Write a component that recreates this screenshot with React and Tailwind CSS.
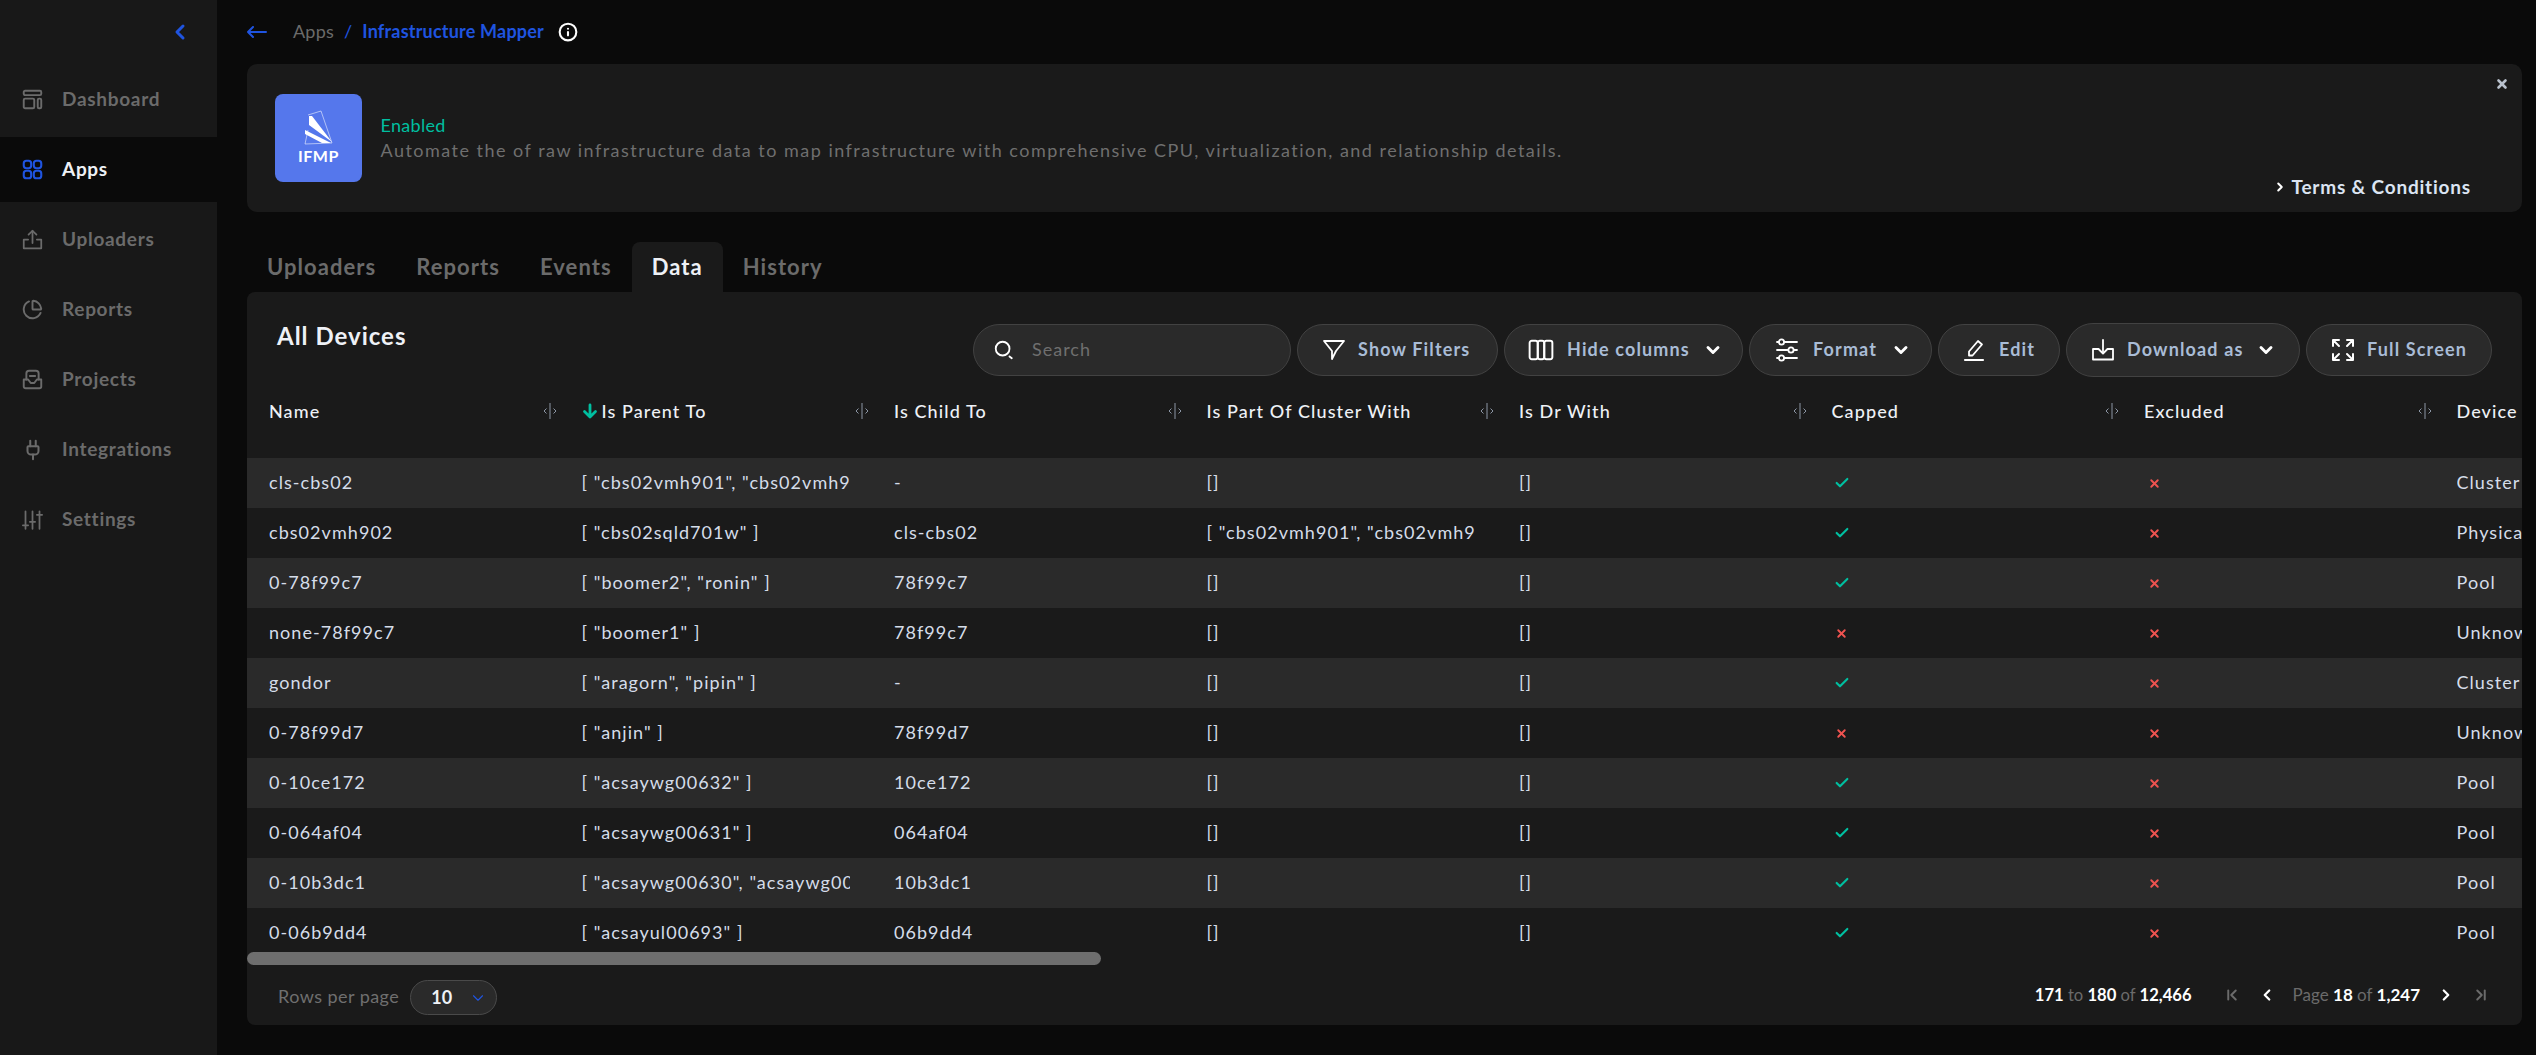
import {
  ChevronDown,
  ChevronFirst,
  ChevronLast,
  ChevronLeft,
  ChevronRight,
  ChartPie,
  Check,
  Info,
  Plug,
  X,
} from "lucide-react";

const FONT = "font-['Lato','Open_Sans',sans-serif]";

function Svg({ className, children, width = 2 }) {
  return (
    <svg viewBox="0 0 24 24" fill="none" stroke="currentColor" strokeWidth={width} strokeLinecap="round" strokeLinejoin="round" className={className}>
      {children}
    </svg>
  );
}

const DashIcon = () => (
  <Svg className="w-[21px] h-[21px]" width={2.2}>
    <rect x="2" y="2" width="20" height="5" rx="1.5" />
    <rect x="2" y="11" width="12" height="11" rx="1.5" />
    <rect x="18" y="11" width="4" height="11" rx="1.5" />
  </Svg>
);
const AppsIcon = () => (
  <Svg className="w-[21px] h-[21px]" width={2.4}>
    <rect x="2" y="2" width="8.5" height="8.5" rx="3" />
    <rect x="13.5" y="2" width="8.5" height="8.5" rx="3" />
    <rect x="2" y="13.5" width="8.5" height="8.5" rx="3" />
    <rect x="13.5" y="13.5" width="8.5" height="8.5" rx="3" />
  </Svg>
);
const UploadIcon = () => (
  <Svg className="w-[21px] h-[21px]" width={2}>
    <path d="M7 12H2v10h20V12h-5" />
    <path d="M12 16V2" />
    <path d="M7.5 6.5 12 2l4.5 4.5" />
  </Svg>
);
const InboxIcon = () => (
  <Svg className="w-[21px] h-[21px]" width={2.2}>
    <path d="M5 12V5a3 3 0 0 1 3-3h8a3 3 0 0 1 3 3v7" />
    <path d="M9 8h6" />
    <path d="M2 12h5l3 4h4l3-4h5v8a2 2 0 0 1-2 2H4a2 2 0 0 1-2-2z" />
  </Svg>
);
const SlidersIcon = () => (
  <Svg className="w-[21px] h-[24px]" width={2}>
    <path d="M4 2v20M12 2v20M20 2v20" />
    <path d="M1 18h6M9 14h6M17 6h6" />
  </Svg>
);

const SearchIcon = () => (
  <Svg className="w-[22px] h-[22px] text-white" width={2}>
    <circle cx="10.5" cy="10.5" r="7.5" />
    <path d="m18 19 2.5 2" />
  </Svg>
);
const FunnelIcon = () => (
  <Svg className="w-[24px] h-[24px] text-white" width={1.8}>
    <path d="M2 3h20l-8 10-4 8v-8z" />
  </Svg>
);
const ColumnsIcon = () => (
  <Svg className="w-[26px] h-[26px] text-white" width={1.8}>
    <rect x="1.5" y="3.5" width="7.5" height="17" rx="2" />
    <rect x="9" y="3.5" width="6" height="17" rx="2" />
    <rect x="15" y="3.5" width="7.5" height="17" rx="2" />
  </Svg>
);
const FormatIcon = () => (
  <Svg className="w-[24px] h-[24px] text-white" width={1.8}>
    <path d="M9.5 4H22M2 12h11M19 12h3M9.5 20H22" />
    <path d="M2 4h1.5M2 20h1.5" />
    <circle cx="6.5" cy="4" r="2.6" />
    <circle cx="16" cy="12" r="2.6" />
    <circle cx="6.5" cy="20" r="2.6" />
  </Svg>
);
const PenIcon = () => (
  <Svg className="w-[24px] h-[24px] text-white" width={1.8}>
    <path d="M3 22h18" strokeWidth="2.2" />
    <path d="M7 17.5v-4L16 3l4 3.5-9.5 11z" />
  </Svg>
);
const DownloadIcon = () => (
  <Svg className="w-[24px] h-[24px] text-white" width={1.8}>
    <path d="M7.5 11H2v10.5h20V11h-5.5" />
    <path d="M12 2v13" />
    <path d="m8 11.5 4 4 4-4" />
  </Svg>
);
const ExpandIcon = () => (
  <Svg className="w-[24px] h-[24px] text-white" width={2}>
    <path d="M2 8V2h6M2 2l6 6" />
    <path d="M22 8V2h-6M22 2l-6 6" />
    <path d="M2 16v6h6M2 22l6-6" />
    <path d="M22 16v6h-6M22 22l-6-6" />
  </Svg>
);
const ResizeIcon = () => (
  <svg viewBox="0 0 16 20" className="w-[16px] h-[20px] text-[#8c96a5]" fill="none" stroke="currentColor" strokeWidth="1">
    <path d="M8 2v16" />
    <path d="M4.5 7.5 2 10l2.5 2.5M11.5 7.5 14 10l-2.5 2.5" />
  </svg>
);

const NAV = [
  { label: "Dashboard", icon: <DashIcon /> },
  { label: "Apps", icon: <AppsIcon />, active: true },
  { label: "Uploaders", icon: <UploadIcon /> },
  { label: "Reports", icon: <ChartPie className="w-[21px] h-[21px]" strokeWidth={2.2} /> },
  { label: "Projects", icon: <InboxIcon /> },
  { label: "Integrations", icon: <Plug className="w-[22px] h-[22px]" strokeWidth={2.2} /> },
  { label: "Settings", icon: <SlidersIcon /> },
];

const COLS = ["Name", "Is Parent To", "Is Child To", "Is Part Of Cluster With", "Is Dr With", "Capped", "Excluded", "Device"];

const ROWS = [
  ["cls-cbs02", '[ "cbs02vmh901", "cbs02vmh902" ]', "-", "[]", "[]", true, false, "Cluster"],
  ["cbs02vmh902", '[ "cbs02sqld701w" ]', "cls-cbs02", '[ "cbs02vmh901", "cbs02vmh903" ]', "[]", true, false, "Physical"],
  ["0-78f99c7", '[ "boomer2", "ronin" ]', "78f99c7", "[]", "[]", true, false, "Pool"],
  ["none-78f99c7", '[ "boomer1" ]', "78f99c7", "[]", "[]", false, false, "Unknown"],
  ["gondor", '[ "aragorn", "pipin" ]', "-", "[]", "[]", true, false, "Cluster"],
  ["0-78f99d7", '[ "anjin" ]', "78f99d7", "[]", "[]", false, false, "Unknown"],
  ["0-10ce172", '[ "acsaywg00632" ]', "10ce172", "[]", "[]", true, false, "Pool"],
  ["0-064af04", '[ "acsaywg00631" ]', "064af04", "[]", "[]", true, false, "Pool"],
  ["0-10b3dc1", '[ "acsaywg00630", "acsaywg00629" ]', "10b3dc1", "[]", "[]", true, false, "Pool"],
  ["0-06b9dd4", '[ "acsayul00693" ]', "06b9dd4", "[]", "[]", true, false, "Pool"],
];

function Pill({ icon, label, chevron, className = "" }) {
  return (
    <button className={`h-[52px] rounded-full border border-[#424242] bg-[#2a2a2a] flex items-center text-[#a9bcd6] font-bold text-[18px] tracking-[1.15px] ${className}`}>
      {icon}
      <span className="whitespace-nowrap pb-[1px]">{label}</span>
      {chevron && <ChevronDown className="w-[20px] h-[20px] text-white" strokeWidth={3.5} />}
    </button>
  );
}

function BoolCell({ value }) {
  return (
    <span className="w-[20px] flex justify-center">
      {value ? (
        <Check className="w-[16px] h-[16px] text-[#00bfa0]" strokeWidth={3.2} />
      ) : (
        <X className="w-[13px] h-[13px] text-[#ef5350]" strokeWidth={3.5} />
      )}
    </span>
  );
}

export default function App() {
  return (
    <div className={`${FONT} flex h-screen w-screen overflow-hidden bg-[#0a0a0a]`}>
      <aside className="w-[217px] shrink-0 bg-[#181818]">
        <div className="h-[67px] flex items-start justify-end pt-[20px] pr-[25px]">
          <ChevronLeft className="w-[24px] h-[24px] text-[#1f54e0]" strokeWidth={3} />
        </div>
        <nav className="flex flex-col gap-[5px]">
          {NAV.map((n) => (
            <div
              key={n.label}
              className={`h-[65px] flex items-center pl-[22px] ${n.active ? "bg-[#0a0a0a] text-[#1f54e0]" : "text-[#6b6b6b]"}`}
            >
              <span className="w-[40px] flex">{n.icon}</span>
              <span className={`text-[19px] font-bold tracking-[0.7px] ${n.active ? "text-[#eef1f6]" : ""}`}>{n.label}</span>
            </div>
          ))}
        </nav>
      </aside>

      <main className="flex-1 min-w-0 flex flex-col pl-[30px] pr-[14px]">
        <div className="h-[64px] shrink-0 flex items-center text-[18px] tracking-[0.2px] pb-[1px]">
          <svg viewBox="0 0 20 12" className="w-[20px] h-[12px] text-[#1f54e0]" fill="none" stroke="currentColor" strokeWidth="2" strokeLinecap="round" strokeLinejoin="round">
            <path d="M1 6h18M6 1 1 6l5 5" />
          </svg>
          <span className="ml-[26px] text-[#6b6b6b]">Apps</span>
          <span className="ml-[10px] text-[#1f54e0]">/</span>
          <span className="ml-[10px] text-[#1f54e0] font-bold">Infrastructure Mapper</span>
          <Info className="ml-[14px] w-[20px] h-[20px] text-white" strokeWidth={2.5} />
        </div>

        <section className="relative h-[148px] shrink-0 rounded-[10px] bg-[#1a1a1a] flex items-center pl-[28px]">
          <div className="w-[87px] h-[88px] rounded-[8px] bg-[#5577ec] flex flex-col items-center pt-[15px]">
            <svg viewBox="0 0 30 36" className="w-[30px] h-[36px]" fill="none">
              <path d="M4 6 17 2l11 32-27 1 3-14" stroke="#ffffff" strokeOpacity="0.6" strokeWidth="0.9" />
              <path d="M5 7h3l20 26-23-17z" fill="#ffffff" />
              <path d="M1 21l26 13-9 0-17-9z" fill="#ffffff" />
            </svg>
            <span className="mt-[1px] text-white font-bold text-[16px] tracking-[0.6px] leading-[20px]">IFMP</span>
          </div>
          <div className="ml-[18.5px] flex-1 min-w-0 pb-[2px]">
            <div className="text-[#00bfa0] text-[18px] tracking-[0.3px] leading-[24px]">Enabled</div>
            <div className="text-[#6f6f6f] text-[18px] leading-[24px] mt-[1px] tracking-[1.48px] whitespace-nowrap">
              Automate the of raw infrastructure data to map infrastructure with comprehensive CPU, virtualization, and relationship details.
            </div>
          </div>
          <div className="self-end mb-[15px] mr-[51px] flex items-center text-[#dbe4f2] font-bold text-[19px] leading-[20px] tracking-[0.8px] whitespace-nowrap">
            <ChevronRight className="w-[14px] h-[14px] mr-[5px] text-white" strokeWidth={3.5} />
            Terms &amp; Conditions
          </div>
          <X className="absolute top-[13px] right-[13px] w-[14px] h-[14px] text-[#b8c0cc]" strokeWidth={4.5} />
        </section>

        <div className="mt-[30px] h-[50px] shrink-0 flex text-[22px] font-bold tracking-[1.05px]">
          {["Uploaders", "Reports", "Events", "Data", "History"].map((t) => (
            <div
              key={t}
              className={`px-[20px] pb-[2px] flex items-center rounded-t-[8px] ${t === "Data" ? "bg-[#1a1a1a] text-[#eef1f6]" : "text-[#6b6b6b]"}`}
            >
              {t}
            </div>
          ))}
        </div>

        <section className="relative h-[733px] shrink-0 rounded-[8px] bg-[#1a1a1a] overflow-hidden">
          <div className="h-[96px] flex items-start justify-between pt-[31px] pl-[30px] pr-[30px]">
            <h2 className="text-[#eef1f6] font-bold text-[24px] leading-[26px] tracking-[1px]">All Devices</h2>
            <div className="flex gap-[6px] items-center">
              <div className="w-[318px] h-[52px] rounded-full border border-[#424242] bg-[#2a2a2a] flex items-center pl-[19px] gap-[17px] text-[18px] tracking-[1px] text-[#6f6f6f]">
                <SearchIcon />
                <span className="pb-[1px]">Search</span>
              </div>
              <Pill className="w-[201px] pl-[24px] gap-[12px]" icon={<FunnelIcon />} label="Show Filters" />
              <Pill className="w-[239px] pl-[23px] gap-[13px]" icon={<ColumnsIcon />} label="Hide columns" chevron />
              <Pill className="w-[183px] pl-[25px] gap-[14px]" icon={<FormatIcon />} label="Format" chevron />
              <Pill className="w-[122px] pl-[23px] gap-[13px]" icon={<PenIcon />} label="Edit" />
              <Pill className="w-[234px] h-[54px] pl-[24px] gap-[12px]" icon={<DownloadIcon />} label="Download as" chevron />
              <Pill className="w-[186px] pl-[24px] gap-[12px]" icon={<ExpandIcon />} label="Full Screen" />
            </div>
          </div>

          <div className="h-[70px] flex pt-[13px] text-[18px] font-medium tracking-[1.1px] text-[#eef1f6] leading-[20px]">
            {COLS.map((c) => (
              <div key={c} className="w-[312.5px] shrink-0 pl-[22px] pr-[2px] flex justify-between">
                <span className="flex whitespace-nowrap">
                  {c === "Is Parent To" && (
                    <svg viewBox="0 0 16 16" className="w-[16px] h-[16px] mt-[2px] mr-[4px] text-[#00bfa0]" fill="none" stroke="currentColor" strokeWidth="2.8" strokeLinecap="round" strokeLinejoin="round">
                      <path d="M8 2v12M2.5 8.5 8 14l5.5-5.5" />
                    </svg>
                  )}
                  {c}
                </span>
                {c !== "Device" && <ResizeIcon />}
              </div>
            ))}
          </div>

          <div>
            {ROWS.map((r, i) => (
              <div key={r[0]} className={`h-[50px] flex items-center text-[18px] tracking-[1.05px] text-[#d5dde9] ${i % 2 === 0 ? "bg-[#2a2a2a]" : "bg-[#1a1a1a]"}`}>
                {r.map((v, j) => (
                  <div key={j} className="w-[312.5px] shrink-0 pl-[22px]">
                    {typeof v === "boolean" ? (
                      <BoolCell value={v} />
                    ) : (
                      <div className="w-[268px] overflow-hidden whitespace-nowrap pb-[2px]">{v}</div>
                    )}
                  </div>
                ))}
              </div>
            ))}
          </div>

          <div className="absolute left-0 top-[660px] w-[854px] h-[13px] rounded-full bg-[#6e6e6e]" />

          <div className="h-[67px] flex items-start justify-between pt-[22px] pl-[31px] pr-[32px]">
            <div className="flex items-center h-[35px]">
              <span className="text-[18px] tracking-[0.45px] text-[#6f6f6f] pb-[2px]">Rows per page</span>
              <div className="ml-[11px] w-[87px] h-[35px] rounded-full border border-[#4a4a4a] bg-[#2a2a2a] flex items-center pl-[20px] text-[#eef1f6] font-bold text-[18px]">
                10
                <ChevronDown className="ml-[17px] w-[18px] h-[18px] text-[#1f54e0]" strokeWidth={1.5} />
              </div>
            </div>
            <div className="flex items-center h-[30px] text-[17px] text-[#6b6b6b]">
              <span className="text-[16.6px]">
                <b className="text-white">171</b> to <b className="text-white">180</b> of <b className="text-white">12,466</b>
              </span>
              <ChevronFirst className="ml-[31px] w-[18px] h-[18px]" strokeWidth={2.6} />
              <ChevronLeft className="ml-[17px] w-[18px] h-[18px] text-white" strokeWidth={3} />
              <span className="ml-[17px]">
                Page <b className="text-white">18</b> of <b className="text-white">1,247</b>
              </span>
              <ChevronRight className="ml-[17px] w-[18px] h-[18px] text-white" strokeWidth={3} />
              <ChevronLast className="ml-[17px] w-[18px] h-[18px]" strokeWidth={2.6} />
            </div>
          </div>
        </section>
      </main>
    </div>
  );
}
